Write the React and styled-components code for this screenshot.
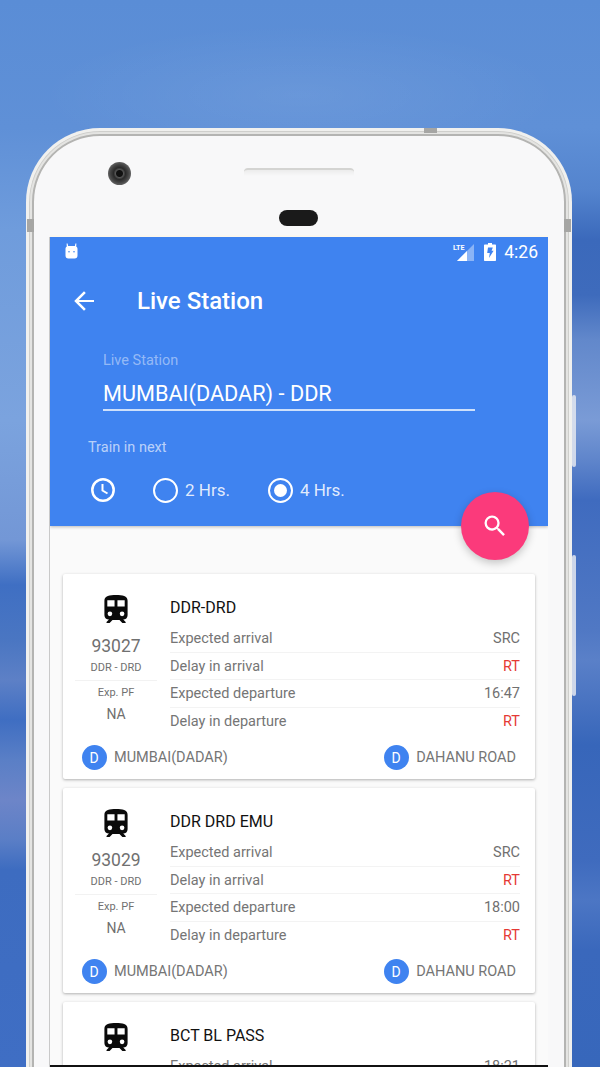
import React from "react";
import styled, { createGlobalStyle } from "styled-components";

const Global = createGlobalStyle`
  html, body { margin: 0; padding: 0; width: 600px; height: 1067px; overflow: hidden; }
  body { font-family: Roboto, "Liberation Sans", sans-serif; }
  * { box-sizing: border-box; }
`;

const Backdrop = styled.div`
  position: relative;
  width: 600px;
  height: 1067px;
  overflow: hidden;
  padding: 128px 28px 0 26px;
  background:
    radial-gradient(ellipse 260px 70px at 300px 95px, rgba(255,255,255,.07), transparent),
    linear-gradient(180deg, #5a8dd6 0, #5f90d7 128px, #6f9cdc 230px, #7ba3de 420px, #7397d6 540px, #3f6fc3 585px, #4a76c2 640px, #5d80c6 680px, #3f6ec2 720px, #5a7fc6 760px, #6d85c8 800px, #5a7ec6 840px, #3d6cc0 870px, #3f6ec4 1067px) 0 0 / 300px 100% no-repeat,
    linear-gradient(180deg, #5a8dd6 0, #5f90d7 128px, #5484ce 190px, #3b69bb 240px, #3e6bbc 295px, #6288cb 340px, #7a9bd6 420px, #5f85cb 460px, #3f6bbf 500px, #5078c4 630px, #5a80c8 660px, #3766ba 745px, #3f6bbe 860px, #4c76c4 900px, #3a68bc 950px, #3767bb 1067px) 300px 0 / 300px 100% no-repeat;
`;

const Phone = styled.div`
  position: relative;
  height: 1000px;
  background: #f8f8f9;
  border-radius: 74px 74px 0 0;
  border: 3px solid #f0f0ee;
  border-bottom: 0;
  box-shadow: inset 0 0 0 1px #cfcfcc, inset 0 0 0 3px #e4e4e2, inset 0 0 0 5px #b4b4b2;
  padding: 106px 21px 0 21px;
`;

const Camera = styled.div`
  position: absolute;
  left: 79px;
  top: 31px;
  width: 23px;
  height: 23px;
  border-radius: 50%;
  background: radial-gradient(circle at 50% 50%, #111 0 3px, #555 4px, #2a2a2a 6px, #444 9px, #666 12px);
`;

const Speaker = styled.div`
  position: absolute;
  left: 215px;
  top: 37px;
  width: 110px;
  height: 8px;
  border-top: 2px solid #d4d4d2;
  border-radius: 4px 4px 0 0;
  background: linear-gradient(180deg, #ececec, #f8f8f9);
`;

const Sensor = styled.div`
  position: absolute;
  left: 250px;
  top: 79px;
  width: 39px;
  height: 16px;
  border-radius: 8px;
  background: #1a1a1a;
`;

const Notch = styled.div`
  position: absolute;
  left: ${(p) => p.$x}px;
  top: ${(p) => p.$y}px;
  width: ${(p) => p.$w}px;
  height: ${(p) => p.$h}px;
  background: #a6a6a4;
`;

const SideButton = styled.div`
  position: absolute;
  left: 543px;
  top: ${(p) => p.$top}px;
  width: 4px;
  height: ${(p) => p.$h}px;
  background: #e4e8f0;
  border-radius: 2px;
  opacity: .85;
`;

const Screen = styled.div`
  position: relative;
  height: 830px;
  background: #fafafa;
  overflow: hidden;
  border-bottom: 2px solid #111;
`;

const ScreenEdge = styled.div`
  height: 830px;
  box-shadow: -1px 0 0 #c9c9c9, 0 -2px 0 #fbf7ef;
`;

const Header = styled.header`
  height: 289px;
  background: #3f83f0;
  color: #fff;
  box-shadow: 0 1px 3px rgba(0,0,0,.25);
`;

const StatusBar = styled.div`
  height: 30px;
  padding: 0 10px 2px 14px;
  display: flex;
  align-items: center;
  justify-content: space-between;
`;

const StatusRight = styled.div`
  display: flex;
  align-items: center;
  gap: 10px;
  font-size: 17.5px;
  font-weight: 400;
  padding-top: 2px;
`;

const Clock = styled.span`
  margin-left: -2px;
`;

const Toolbar = styled.div`
  height: 66px;
  padding: 2px 0 0 22px;
  display: flex;
  align-items: center;
  gap: 41px;
  font-size: 24px;
  font-weight: 500;
`;

const Form = styled.div`
  padding: 20px 73px 0 53px;
`;

const FieldLabel = styled.div`
  font-size: 14.5px;
  line-height: 16px;
  color: rgba(255,255,255,.45);
`;

const FieldValue = styled.div`
  margin-top: 9px;
  height: 33px;
  font-size: 21.7px;
  line-height: 32px;
  border-bottom: 2px solid rgba(255,255,255,.75);
`;

const TrainLabel = styled.div`
  margin: 28px 0 0 38px;
  font-size: 14.5px;
  line-height: 17px;
  color: rgba(255,255,255,.65);
`;

const RadioRow = styled.div`
  margin-top: 21px;
  padding-left: 40px;
  display: flex;
  align-items: center;
  font-size: 17px;
  color: rgba(255,255,255,.85);
`;

const Radio = styled.span`
  width: 25px;
  height: 25px;
  margin: 0 7px 0 ${(p) => p.$gap}px;
  border-radius: 50%;
  border: 2.5px solid #fff;
  display: inline-flex;
  align-items: center;
  justify-content: center;
  &::after {
    content: "";
    display: ${(p) => (p.$on ? "block" : "none")};
    width: 13px;
    height: 13px;
    border-radius: 50%;
    background: #fff;
  }
`;

const Fab = styled.button`
  position: absolute;
  left: 411px;
  top: 255px;
  width: 68px;
  height: 68px;
  padding: 0;
  border: 0;
  border-radius: 50%;
  background: #fb3a7b;
  box-shadow: 0 3px 8px rgba(0,0,0,.22);
  display: flex;
  align-items: center;
  justify-content: center;
`;

const List = styled.div`
  padding: 48px 13px 0;
  display: flex;
  flex-direction: column;
  gap: 9px;
`;

const Card = styled.article`
  height: 205px;
  flex: none;
  background: #fff;
  border-radius: 2px;
  box-shadow: 0 1px 3px rgba(0,0,0,.3);
  padding: 0 15px 0 12px;
`;

const CardMain = styled.div`
  height: 171px;
  display: flex;
`;

const Side = styled.div`
  width: 82px;
  flex: none;
  text-align: center;
  color: #707070;
`;

const TrainIcon = styled.div`
  height: 59px;
  display: flex;
  justify-content: center;
  padding-top: 21px;
`;

const TrainNo = styled.div`
  font-size: 17.5px;
  line-height: 28px;
  margin-top: -1px;
`;

const Route = styled.div`
  font-size: 11px;
  line-height: 14px;
  margin-top: 1px;
  padding-bottom: 5px;
  border-bottom: 1px solid #f2f2f2;
`;

const PfLabel = styled.div`
  font-size: 11px;
  line-height: 14px;
  margin-top: 5px;
`;

const PfValue = styled.div`
  font-size: 14px;
  line-height: 16px;
  margin-top: 6px;
`;

const Details = styled.div`
  flex: 1;
  margin-left: 13px;
  display: flex;
  flex-direction: column;
`;

const TrainName = styled.div`
  height: 51px;
  padding: 23px 0 0 0;
  font-size: 16px;
  line-height: 22px;
  color: #111;
`;

const InfoRow = styled.div`
  height: 27.7px;
  display: flex;
  justify-content: space-between;
  align-items: center;
  font-size: 14.5px;
  color: #757575;
  border-bottom: 1px solid ${(p) => (p.$last ? "transparent" : "#f3f3f3")};
`;

const InfoValue = styled.span`
  color: ${(p) => (p.$red ? "#e53935" : "#707070")};
`;

const Stations = styled.div`
  display: flex;
  justify-content: space-between;
  align-items: center;
  padding: 0 4px 0 7px;
`;

const Station = styled.div`
  display: flex;
  align-items: center;
  gap: 7px;
  font-size: 14.5px;
  color: #757575;
`;

const Badge = styled.span`
  width: 25px;
  height: 25px;
  border-radius: 50%;
  background: #3f83f0;
  color: #fff;
  font-size: 14px;
  padding-right: 1px;
  display: flex;
  align-items: center;
  justify-content: center;
`;

const RobotIcon = () => (
  <svg width="15" height="17" viewBox="0 0 15 17" aria-hidden="true">
    <path fill="#fff" d="M2.6 0.5h1l.5 2.5h6.8l.5-2.5h1l-.2 2.9c.9.6 1.3 1.4 1.3 2.6v6.5c0 1.9-1 2.9-2.9 2.9H4.4c-1.9 0-2.9-1-2.9-2.9V6c0-1.2.4-2 1.3-2.6z" />
    <circle cx="5" cy="8.800" r=".8" fill="#3f83f0" />
    <circle cx="10" cy="8.800" r=".8" fill="#3f83f0" />
  </svg>
);

const SignalIcon = () => (
  <svg width="22" height="19" viewBox="0 0 22 19" aria-hidden="true">
    <path fill="#fff" opacity=".4" d="M22 1v17H5z" />
    <path fill="#fff" d="M15 8v10H5z" />
    <text x="1" y="7" fontSize="8" fontWeight="700" fill="#fff" fontFamily="Roboto, sans-serif" textLength="11.500" lengthAdjust="spacingAndGlyphs">LTE</text>
  </svg>
);

const BatteryIcon = () => (
  <svg width="12" height="18" viewBox="0 0 12 18" aria-hidden="true">
    <path fill="#fff" d="M4 0h4v1.500h3c.6 0 1 .4 1 1V17c0 .6-.4 1-1 1H1c-.6 0-1-.4-1-1V2.500c0-.6.4-1 1-1h3z" />
    <path fill="#3f83f0" d="M4 4.500h4.800l-1.200 3.300h2L5 15l.8-5H3.200z" />
  </svg>
);

const BackIcon = () => (
  <svg width="24" height="24" viewBox="0 0 24 24" aria-hidden="true">
    <path fill="#fff" d="M22 11H6.800l7-7L12 2.200 2.200 12l9.800 9.800 1.800-1.800-7-7H22z" />
  </svg>
);

const ClockIcon = () => (
  <svg width="26" height="26" viewBox="0 0 26 26" aria-hidden="true" fill="none" stroke="#fff" strokeWidth="2.500">
    <circle cx="13" cy="13" r="10.700" />
    <path strokeWidth="2" d="M12.500 7v6.500l5 3" />
  </svg>
);

const SearchIcon = () => (
  <svg width="28" height="28" viewBox="0 0 24 24" aria-hidden="true">
    <path fill="#fff" d="M15.500 14h-.79l-.28-.27A6.470 6.470 0 0 0 16 9.500 6.500 6.500 0 1 0 9.500 16c1.610 0 3.090-.59 4.230-1.570l.27.28v.79l5 4.990L20.490 19l-4.990-5zm-6 0C7.010 14 5 11.990 5 9.500S7.010 5 9.500 5 14 7.010 14 9.500 11.990 14 9.500 14z" />
  </svg>
);

const TrainGlyph = () => (
  <svg width="24" height="28" viewBox="0 0 24 29" aria-hidden="true">
    <path fill="#0a0a0a" d="M12 0C5.500 0 0 .8 0 6v15c0 2.700 2.200 4.500 4.700 4.500L2.200 28v1h3.200l3-3h7.200l3 3h3.400v-1l-2.500-2.500c2.500 0 4.500-1.800 4.500-4.500V6c0-5.200-5.300-6-12-6z" />
    <path fill="#fff" d="M3 5.500h7.500V12H3zM13.500 5.500H21V12h-7.500z" />
    <circle cx="5.700" cy="19.500" r="2.400" fill="#fff" />
    <circle cx="18.300" cy="19.500" r="2.400" fill="#fff" />
  </svg>
);

const TrainCard = ({ t }) => (
  <Card>
    <CardMain>
      <Side>
        <TrainIcon><TrainGlyph /></TrainIcon>
        <TrainNo>{t.no}</TrainNo>
        <Route>DDR - DRD</Route>
        <PfLabel>Exp. PF</PfLabel>
        <PfValue>NA</PfValue>
      </Side>
      <Details>
        <TrainName>{t.name}</TrainName>
        <InfoRow><span>Expected arrival</span><InfoValue>SRC</InfoValue></InfoRow>
        <InfoRow><span>Delay in arrival</span><InfoValue $red>RT</InfoValue></InfoRow>
        <InfoRow><span>Expected departure</span><InfoValue>{t.dep}</InfoValue></InfoRow>
        <InfoRow $last><span>Delay in departure</span><InfoValue $red>RT</InfoValue></InfoRow>
      </Details>
    </CardMain>
    <Stations>
      <Station><Badge>D</Badge>MUMBAI(DADAR)</Station>
      <Station><Badge>D</Badge>DAHANU ROAD</Station>
    </Stations>
  </Card>
);

const trains = [
  { no: "93027", name: "DDR-DRD", dep: "16:47" },
  { no: "93029", name: "DDR DRD EMU", dep: "18:00" },
];

export default function App() {
  return (
    <Backdrop>
      <Global />
      <Phone>
        <Notch $x={395} $y={-3} $w={13} $h={5} />
        <Notch $x={-2} $y={88} $w={7} $h={13} />
        <Notch $x={535} $y={88} $w={7} $h={13} />
        <Camera />
        <Speaker />
        <Sensor />
        <SideButton $top={264} $h={72} />
        <SideButton $top={424} $h={141} />
        <ScreenEdge>
          <Screen>
            <Header>
              <StatusBar>
                <RobotIcon />
                <StatusRight>
                  <SignalIcon />
                  <BatteryIcon />
                  <Clock>4:26</Clock>
                </StatusRight>
              </StatusBar>
              <Toolbar>
                <BackIcon />
                <span>Live Station</span>
              </Toolbar>
              <Form>
                <FieldLabel>Live Station</FieldLabel>
                <FieldValue>MUMBAI(DADAR) - DDR</FieldValue>
              </Form>
              <TrainLabel>Train in next</TrainLabel>
              <RadioRow>
                <ClockIcon />
                <Radio $gap={37} />
                <span>2 Hrs.</span>
                <Radio $gap={38} $on />
                <span>4 Hrs.</span>
              </RadioRow>
            </Header>
            <Fab aria-label="Search"><SearchIcon /></Fab>
            <List>
              {trains.map((t) => <TrainCard key={t.no} t={t} />)}
              <Card>
                <CardMain>
                  <Side>
                    <TrainIcon><TrainGlyph /></TrainIcon>
                  </Side>
                  <Details>
                    <TrainName>BCT BL PASS</TrainName>
                    <InfoRow><span>Expected arrival</span><InfoValue>18:21</InfoValue></InfoRow>
                  </Details>
                </CardMain>
              </Card>
            </List>
          </Screen>
        </ScreenEdge>
      </Phone>
    </Backdrop>
  );
}
